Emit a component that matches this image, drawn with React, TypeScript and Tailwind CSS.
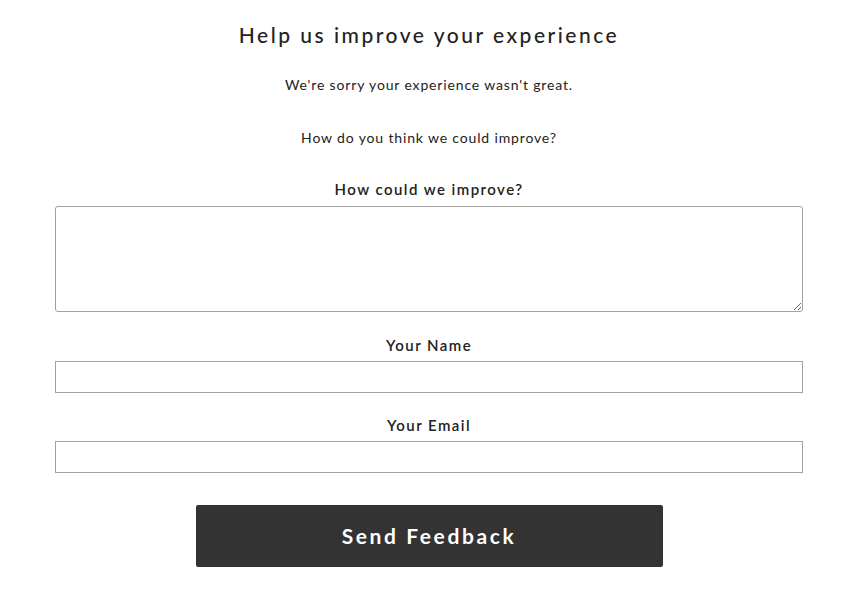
import React from "react";

export default function App() {
  return (
    <div className="min-h-[600px] w-[854px] bg-white text-[#222] font-['Lato',_'Noto_Sans',_sans-serif]">
      <div className="flex flex-col items-center pl-[55px] pr-[51px] pt-[21px]">
        <h1 className="text-[21px] leading-[28px] font-medium tracking-[2.5px] text-[#222]">
          Help us improve your experience
        </h1>
        <p className="mt-[26px] text-[14px] leading-[20px] tracking-[0.85px] text-[#222]">
          We're sorry your experience wasn't great.
        </p>
        <p className="mt-[33px] text-[14px] leading-[20px] tracking-[0.85px] text-[#222]">
          How do you think we could improve?
        </p>
        <label className="mt-[31px] text-[15px] leading-[20px] font-semibold tracking-[1.45px] text-[#222]">
          How could we improve?
        </label>
        <textarea className="mt-[7px] h-[106px] w-full rounded-[3px] border border-[#a0a0a0] bg-white resize-y" />
        <label className="mt-[23px] text-[15px] leading-[20px] font-semibold tracking-[1.45px] text-[#222]">
          Your Name
        </label>
        <input className="mt-[6px] h-[32px] w-full border border-[#a0a0a0] bg-white" />
        <label className="mt-[22px] text-[15px] leading-[20px] font-semibold tracking-[1.45px] text-[#222]">
          Your Email
        </label>
        <input className="mt-[6px] h-[32px] w-full border border-[#a0a0a0] bg-white" />
        <button className="mt-[32px] flex h-[62px] w-[467px] items-center justify-center rounded-[2px] bg-[#333333] text-[21px] font-bold tracking-[2.6px] text-white">
          Send Feedback
        </button>
      </div>
    </div>
  );
}
